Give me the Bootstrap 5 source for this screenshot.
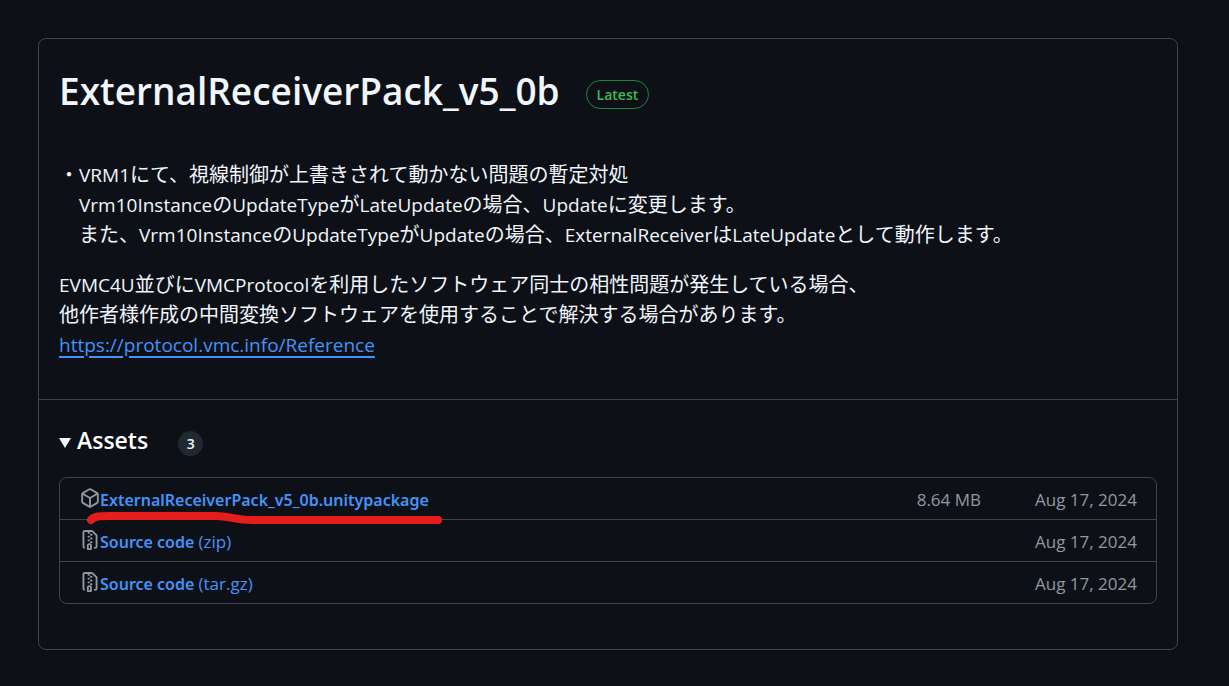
<!DOCTYPE html>
<html lang="ja" data-bs-theme="dark">
<head>
<meta charset="utf-8">
<meta name="viewport" content="width=device-width, initial-scale=1">
<title>ExternalReceiverPack_v5_0b</title>
<link href="https://cdn.jsdelivr.net/npm/bootstrap@5.3.0/dist/css/bootstrap.min.css" rel="stylesheet">
<style>
body { background: #0d1117; color: #f0f6fc; font-family: "Open Sans", "Noto Sans CJK JP", sans-serif; }
a { color: #4493f8; }
.page { padding: 38px 51px 36px 38px; }
.release { background: transparent; border-color: #3d444d; border-radius: 8px; }
.release-body { padding: 22px 20px 39px; }
.release-title { font-size: 37px; line-height: 60px; font-weight: 600; margin-bottom: 39px; gap: 0 26px; }
.release-title a { color: #f0f6fc; }
.latest { font-size: 14px; line-height: 27px; font-weight: 600; color: #3fb950; border: 1px solid #238636; border-radius: 20px; padding: 0 10px; margin-top: 6px; }
.notes p { font-size: 20px; line-height: 30px; margin-bottom: 20px; }
.notes p:last-child { margin-bottom: 0; }
.latin { font-size: 19px; }
.notes a { text-underline-offset: 4px; text-decoration-thickness: 2px; }
.assets { border-top: 1px solid #3d444d; padding: 20px 20px 45px; }
.assets summary { list-style: none; line-height: 40px; margin-bottom: 17px; }
.assets summary::-webkit-details-marker { display: none; }
.assets h2 { font-size: 23px; line-height: 40px; font-weight: 600; margin: 0 30px 0 6px; }
.caret { width: 12px; height: 10px; fill: #f0f6fc; margin-top: 6px; }
details:not([open]) .caret { transform: rotate(-90deg); }
.tally { width: 25px; height: 25px; line-height: 25px; font-size: 14px; font-weight: 600; background: #212830; margin-top: 6px; }
.asset-list { border: 1px solid #3d444d; border-radius: 8px; --bs-list-group-border-radius: 8px; }
.asset-list .list-group-item { background: transparent; border-color: #3d444d; color: #9198a1; font-size: 17px; line-height: 20px; padding: 12px 19px 9px 20px; }
.asset-list a { font-family: "Noto Sans", sans-serif; font-size: 16px; font-weight: 600; }
.asset-list small { font-family: "Open Sans", sans-serif; font-size: 17px; font-weight: 400; }
.oct { width: 20px; height: 20px; fill: #9198a1; margin-top: -4px; }
.when { width: 156px; }
.stroke { left: 26px; bottom: -6px; width: 356px; height: 13px; z-index: 2; pointer-events: none; }
</style>
</head>
<body>
<svg class="d-none" aria-hidden="true">
  <symbol id="zip" viewBox="0 0 16 16"><path d="M3.5 1.75v11.5c0 .09.048.173.126.217a.75.75 0 0 1-.752 1.298A1.748 1.748 0 0 1 2 13.25V1.75C2 .784 2.784 0 3.75 0h5.586c.464 0 .909.185 1.237.513l2.914 2.914c.329.328.513.773.513 1.237v8.586A1.75 1.75 0 0 1 12.25 15h-.5a.75.75 0 0 1 0-1.5h.5a.25.25 0 0 0 .25-.25V4.664a.25.25 0 0 0-.073-.177L9.513 1.573a.25.25 0 0 0-.177-.073H3.75a.25.25 0 0 0-.25.25Zm3.75 8.75h.5c.966 0 1.75.784 1.75 1.75v3a.75.75 0 0 1-.75.75h-2.5a.75.75 0 0 1-.75-.75v-3c0-.966.784-1.75 1.75-1.75ZM7 12.25v2.25h1v-2.25a.25.25 0 0 0-.25-.25h-.5a.25.25 0 0 0-.25.25ZM6.75 1.5h.5a.75.75 0 0 1 0 1.5h-.5a.75.75 0 0 1 0-1.5ZM8 3.75A.75.75 0 0 1 8.75 3h.5a.75.75 0 0 1 0 1.5h-.5A.75.75 0 0 1 8 3.75Zm-2 1.5a.75.75 0 0 1 .75-.75h.5a.75.75 0 0 1 0 1.5h-.5A.75.75 0 0 1 6 5.25ZM8.75 6h.5a.75.75 0 0 1 0 1.5h-.5a.75.75 0 0 1 0-1.5Zm-2 1.5h.5a.75.75 0 0 1 0 1.5h-.5a.75.75 0 0 1 0-1.5ZM8.75 9h.5a.75.75 0 0 1 0 1.5h-.5a.75.75 0 0 1 0-1.5Z"/></symbol>
</svg>
<main class="page">
  <article class="card release">
    <div class="release-body">
      <h1 class="release-title d-flex flex-wrap align-items-center"><a href="#" class="text-decoration-none">ExternalReceiverPack_v5_0b</a><span class="latest">Latest</span></h1>
      <div class="notes">
        <p>・<span class="latin">VRM1</span>にて、視線制御が上書きされて動かない問題の暫定対処<br>
        　<span class="latin">Vrm10Instance</span>の<span class="latin">UpdateType</span>が<span class="latin">LateUpdate</span>の場合、<span class="latin">Update</span>に変更します。<br>
        　また、<span class="latin">Vrm10Instance</span>の<span class="latin">UpdateType</span>が<span class="latin">Update</span>の場合、<span class="latin">ExternalReceiver</span>は<span class="latin">LateUpdate</span>として動作します。</p>
        <p><span class="latin">EVMC4U</span>並びに<span class="latin">VMCProtocol</span>を利用したソフトウェア同士の相性問題が発生している場合、<br>
        他作者様作成の中間変換ソフトウェアを使用することで解決する場合があります。<br>
        <a href="#" class="latin">https://protocol.vmc.info/Reference</a></p>
      </div>
    </div>
    <details class="assets" open>
      <summary class="d-flex align-items-center">
        <svg class="caret" viewBox="0 0 12 10" aria-hidden="true"><path d="M0 0h12L6 10Z"/></svg>
        <h2>Assets</h2>
        <span class="tally rounded-circle text-center">3</span>
      </summary>
      <ul class="list-group list-group-flush asset-list">
        <li class="list-group-item d-flex align-items-center position-relative">
          <svg class="oct" viewBox="0 0 16 16" aria-hidden="true"><path d="m8.878.392 5.25 3.045c.54.314.872.89.872 1.514v6.098a1.75 1.75 0 0 1-.872 1.514l-5.25 3.045a1.75 1.75 0 0 1-1.756 0l-5.25-3.045A1.75 1.75 0 0 1 1 11.049V4.951c0-.624.332-1.201.872-1.514L7.122.392a1.75 1.75 0 0 1 1.756 0ZM7.875 1.69l-4.63 2.685L8 7.133l4.755-2.758-4.63-2.685a.248.248 0 0 0-.25 0ZM2.5 5.677v5.372c0 .09.047.171.125.216l4.625 2.683V8.432Zm6.25 8.271 4.625-2.683a.25.25 0 0 0 .125-.216V5.677L8.75 8.432Z"/></svg>
          <a href="#" class="text-decoration-none me-auto">ExternalReceiverPack_v5_0b.unitypackage</a>
          <span>8.64 MB</span>
          <span class="when text-end">Aug 17, 2024</span>
          <svg class="stroke position-absolute" viewBox="0 0 356 13" aria-hidden="true"><path d="M5 8C8 4 14 4 24 4H130C143 4 150 8 166 8H352" fill="none" stroke="#e71c1c" stroke-width="8" stroke-linecap="round" stroke-linejoin="round"/></svg>
        </li>
        <li class="list-group-item d-flex align-items-center">
          <svg class="oct" aria-hidden="true"><use href="#zip"/></svg>
          <a href="#" class="text-decoration-none me-auto">Source code <small>(zip)</small></a>
          <span class="when text-end">Aug 17, 2024</span>
        </li>
        <li class="list-group-item d-flex align-items-center">
          <svg class="oct" aria-hidden="true"><use href="#zip"/></svg>
          <a href="#" class="text-decoration-none me-auto">Source code <small>(tar.gz)</small></a>
          <span class="when text-end">Aug 17, 2024</span>
        </li>
      </ul>
    </details>
  </article>
</main>
<script src="https://cdn.jsdelivr.net/npm/bootstrap@5.3.0/dist/js/bootstrap.bundle.min.js"></script>
</body>
</html>
